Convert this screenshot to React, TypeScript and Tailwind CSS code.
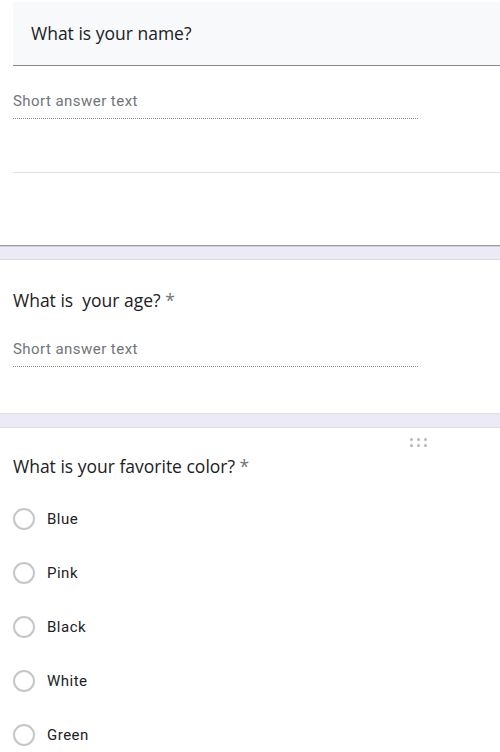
import React from "react";

const baseFont = { fontFamily: "Roboto, 'Liberation Sans', sans-serif" };
const titleFont = { fontFamily: "'Open Sans', Roboto, sans-serif" };

function ShortAnswer() {
  return (
    <div className="ml-[13px] w-[405px] border-b border-dotted border-[#8a8a8a] pb-[7px] text-[15px] leading-[20px] tracking-[0.45px] text-[#70757a]">
      Short answer text
    </div>
  );
}

function Radio({ label }: { label: string }) {
  return (
    <div className="flex h-[54px] items-center pl-[13px]">
      <div className="h-[22px] w-[22px] rounded-full border-2 border-[#c4c7ca]" />
      <div className="ml-[12px] text-[15px] leading-[20px] tracking-[0.5px] text-[#202124]">{label}</div>
    </div>
  );
}

export default function App() {
  return (
    <div className="w-[500px] h-[752px] overflow-hidden bg-white" style={baseFont}>
      {/* Section 1 */}
      <div className="h-[2px]" />
      <div
        className="ml-[13px] flex h-[64px] items-center border-b border-[#80868b] bg-[#f8f9fa] pl-[18px] pb-[1px] text-[17.5px] text-[#202124]"
        style={titleFont}
      >
        What is your name?
      </div>
      <div className="h-[25px]" />
      <ShortAnswer />
      <div className="h-[53px]" />
      <div className="ml-[13px] h-px bg-[#e0e0e0]" />
      <div className="h-[72px]" />
      {/* band 1 */}
      <div className="border-t border-[#9a9a9a]">
        <div className="h-px bg-[#d2d0dc]" />
        <div className="h-[12px] bg-[#ecebf5]" />
        <div className="h-px bg-[#d9d9e0]" />
      </div>

      {/* Section 2 */}
      <div className="h-[28px]" />
      <div className="pl-[13px] text-[17.5px] leading-[24px] text-[#202124] whitespace-pre" style={titleFont}>
        What is  your age? <span className="text-[#70757a]">*</span>
      </div>
      <div className="h-[27px]" />
      <ShortAnswer />
      <div className="h-[46px]" />
      {/* band 2 */}
      <div className="border-t border-[#dadce0]">
        <div className="h-[13px] bg-[#ecebf5]" />
        <div className="h-px bg-[#dadce0]" />
      </div>

      {/* Section 3 */}
      <div className="h-[10px]" />
      <div className="ml-[410px] grid w-[17px] grid-cols-3 gap-x-[4px] gap-y-[3px]">
        {Array.from({ length: 6 }).map((_, i) => (
          <div key={i} className="h-[3px] w-[3px] rounded-full bg-[#b4b7bb]" />
        ))}
      </div>
      <div className="h-[7px]" />
      <div className="pl-[13px] text-[17.5px] leading-[24px] text-[#202124]" style={titleFont}>
        What is your favorite color? <span className="text-[#70757a]">*</span>
      </div>
      <div className="h-[14px]" />
      <Radio label="Blue" />
      <Radio label="Pink" />
      <Radio label="Black" />
      <Radio label="White" />
      <Radio label="Green" />
    </div>
  );
}
